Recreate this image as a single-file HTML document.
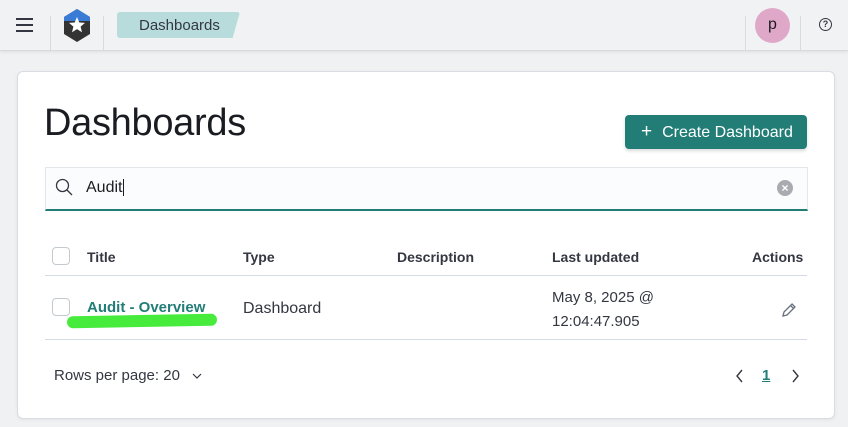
<!DOCTYPE html><html><head><style>
body{margin:0;width:848px;height:427px;background:#f0f1f3;font-family:"Liberation Sans",sans-serif;color:#343741;position:relative;overflow:hidden}
.a{position:absolute}
.hdr{left:0;top:0;width:848px;height:50px;background:#f1f2f4;border-bottom:1px solid #d8dadf;box-shadow:0 1px 3px rgba(0,0,0,.08)}
.vl{top:16px;width:1px;height:34px;background:#d8dadf}
.panel{left:17px;top:71px;width:816px;height:346px;background:#fff;border:1px solid #d8dde3;border-radius:6px;box-shadow:0 1px 3px rgba(0,0,0,.06)}
.th{top:249px;font-size:14px;font-weight:bold;color:#343741}
.cb{width:16px;height:16px;border:1px solid #c5c9d0;border-radius:4px;background:#fff}
</style></head><body>
<div class="a hdr"></div>
<div class="a" style="left:16px;top:18px;width:17px;height:2px;background:#343741"></div>
<div class="a" style="left:16px;top:24px;width:17px;height:2px;background:#343741"></div>
<div class="a" style="left:16px;top:30px;width:17px;height:2px;background:#343741"></div>
<div class="a vl" style="left:50px"></div>
<svg class="a" style="left:63px;top:9px" width="28" height="33" viewBox="0 0 28 33"><path d="M14 0L27 8V25L14 33L1 25V8Z" fill="#333"/><path d="M14 0L27 8V12H1V8Z" fill="#3a7bd5"/><path d="M14 8l2.3 5.5 5.7.4-4.4 3.7 1.4 5.6-5-3.1-5 3.1 1.4-5.6-4.4-3.7 5.7-.4z" fill="#fff"/></svg>
<div class="a vl" style="left:103px"></div>
<div class="a" style="left:117px;top:12px;width:123px;height:26px;background:#b8dcdc;border-radius:3px;clip-path:polygon(0 0,100% 0,94% 100%,0 100%)"></div>
<div class="a" style="left:139px;top:17px;font-size:15px;color:#343741">Dashboards</div>
<div class="a vl" style="left:745px"></div>
<div class="a" style="left:755px;top:8px;width:35px;height:35px;border-radius:50%;background:#e0a8c8;text-align:center;line-height:33px;font-size:16px;color:#1a1c21">p</div>
<div class="a vl" style="left:800px"></div>
<div class="a" style="left:819px;top:18px;width:11px;height:11px;border:1.3px solid #343741;border-radius:50%;font-size:9px;text-align:center;line-height:11px;font-weight:bold">?</div>
<div class="a panel"></div>
<div class="a" style="left:44px;top:102px;font-size:38px;font-weight:300;color:#1a1c21;letter-spacing:-0.3px">Dashboards</div>
<div class="a" style="left:625px;top:115px;width:182px;height:34px;background:#227d77;border-radius:4px;color:#fff;font-size:16px;line-height:34px;box-shadow:0 2px 3px rgba(0,0,0,.15)"><span style="margin-left:16px;font-size:19px">+</span><span style="margin-left:10px">Create Dashboard</span></div>
<div class="a" style="left:45px;top:167px;width:761px;height:41px;background:#fbfcfd;border:1px solid #e4e7ea;border-bottom:2px solid #227d77;box-sizing:content-box"></div>
<svg class="a" style="left:55px;top:178px" width="18" height="18" viewBox="0 0 18 18"><circle cx="7.5" cy="7.5" r="6" fill="none" stroke="#343741" stroke-width="1.3"/><path d="M12 12l5 5" stroke="#343741" stroke-width="1.3"/></svg>
<div class="a" style="left:86px;top:179px;font-size:16px;color:#1a1c21">Audit<span style="border-left:1px solid #1a1c21;margin-left:1px"></span></div>
<div class="a" style="left:777px;top:180px;width:16px;height:16px;border-radius:50%;background:#a8abb0;color:#fff;font-size:12px;text-align:center;line-height:16px;font-weight:bold">×</div>
<div class="a cb" style="left:52px;top:247px"></div>
<div class="a th" style="left:87px">Title</div>
<div class="a th" style="left:243px">Type</div>
<div class="a th" style="left:397px">Description</div>
<div class="a th" style="left:552px">Last updated</div>
<div class="a th" style="left:752px">Actions</div>
<div class="a" style="left:45px;top:275px;width:762px;height:1px;background:#d3dae6"></div>
<div class="a cb" style="left:52px;top:298px"></div>
<div class="a" style="left:67px;top:315px;width:150px;height:12px;border-radius:6px;background:#46eb3c;transform:rotate(-1deg)"></div>
<div class="a" style="left:87px;top:299px;font-size:15px;font-weight:bold;color:#227d77">Audit - Overview</div>
<div class="a" style="left:243px;top:300px;font-size:16px">Dashboard</div>
<div class="a" style="left:552px;top:286px;font-size:15px;line-height:24px">May 8, 2025 @<br>12:04:47.905</div>
<svg class="a" style="left:781px;top:302px" width="16" height="16" viewBox="0 0 16 16"><path d="M11 2l3 3-8 8-4 1 1-4z M9.5 3.5l3 3" fill="none" stroke="#69707d" stroke-width="1.3"/></svg>
<div class="a" style="left:45px;top:339px;width:762px;height:1px;background:#d3dae6"></div>
<div class="a" style="left:54px;top:367px;font-size:15px">Rows per page: 20</div>
<svg class="a" style="left:192px;top:372px" width="10" height="8" viewBox="0 0 10 8"><path d="M1 2l4 4 4-4" fill="none" stroke="#343741" stroke-width="1.2"/></svg>
<svg class="a" style="left:735px;top:368px" width="10" height="16" viewBox="0 0 10 16"><path d="M7 2L2 8l5 6" fill="none" stroke="#343741" stroke-width="1.4"/></svg>
<div class="a" style="left:762px;top:367px;font-size:15px;font-weight:bold;color:#227d77;text-decoration:underline">1</div>
<svg class="a" style="left:790px;top:368px" width="10" height="16" viewBox="0 0 10 16"><path d="M3 2l5 6-5 6" fill="none" stroke="#343741" stroke-width="1.4"/></svg>
</body></html>
